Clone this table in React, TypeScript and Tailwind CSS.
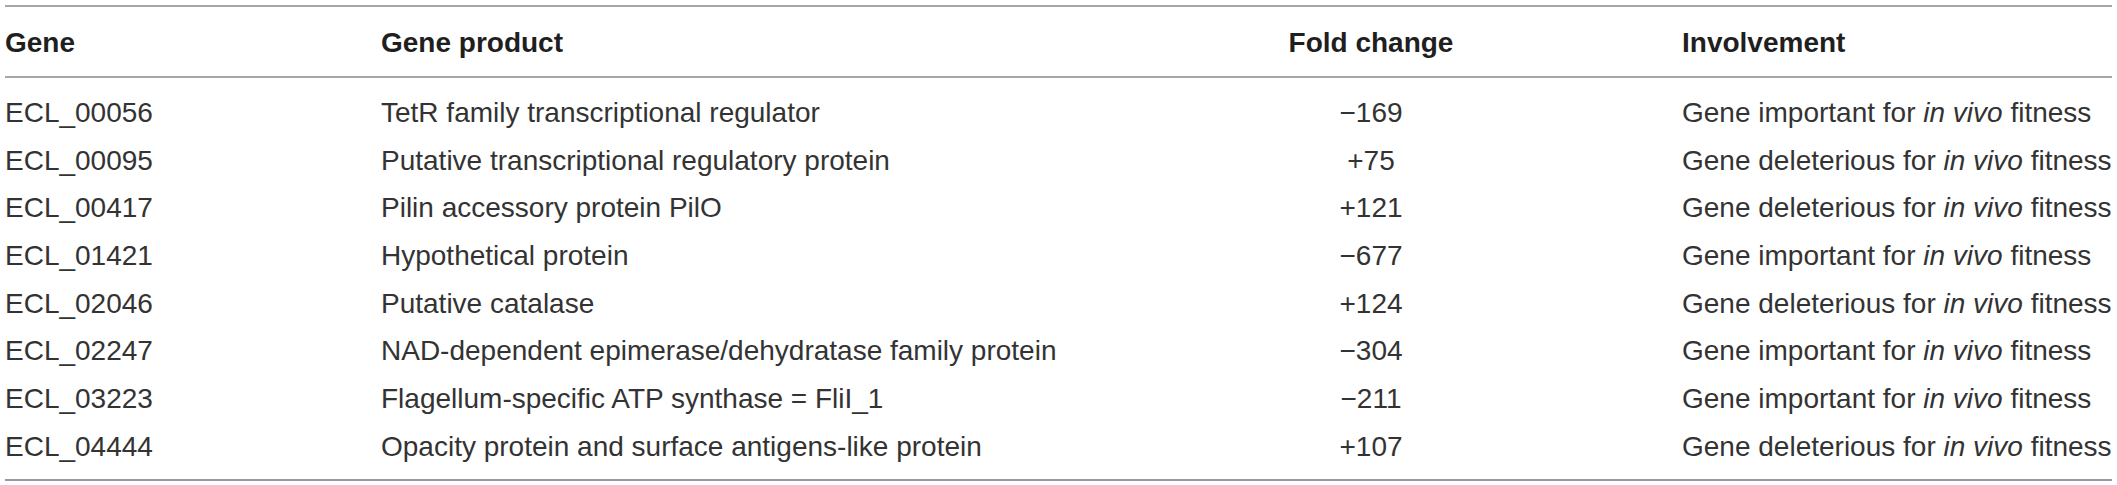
const rows = [
  { gene: 'ECL_00056', product: 'TetR family transcriptional regulator', fold: '−169', effect: 'important' },
  { gene: 'ECL_00095', product: 'Putative transcriptional regulatory protein', fold: '+75', effect: 'deleterious' },
  { gene: 'ECL_00417', product: 'Pilin accessory protein PilO', fold: '+121', effect: 'deleterious' },
  { gene: 'ECL_01421', product: 'Hypothetical protein', fold: '−677', effect: 'important' },
  { gene: 'ECL_02046', product: 'Putative catalase', fold: '+124', effect: 'deleterious' },
  { gene: 'ECL_02247', product: 'NAD-dependent epimerase/dehydratase family protein', fold: '−304', effect: 'important' },
  { gene: 'ECL_03223', product: 'Flagellum-specific ATP synthase = FliI_1', fold: '−211', effect: 'important' },
  { gene: 'ECL_04444', product: 'Opacity protein and surface antigens-like protein', fold: '+107', effect: 'deleterious' },
];

const cols = 'grid grid-cols-[376px_679px_622px_1fr]';

const App = () => {
  return (
    <div className="w-[2117px] h-[485px] bg-white pt-[5px] pl-[5px] text-[28px] leading-[32px] text-[#333333] font-['Liberation_Sans',Arial,sans-serif]">
      <div className="w-[2107px]">
        <div className="h-[2px] bg-[#a6a6a6]" />

        {/* header */}
        <div className={`${cols} pt-[20px] pb-[17px] font-bold text-[#1f1f1f]`}>
          <div>Gene</div>
          <div>Gene product</div>
          <div className="text-center">Fold change</div>
          <div>Involvement</div>
        </div>

        <div className="h-[2px] bg-[#a6a6a6]" />

        <div className="pt-[11px] pb-[8px]">
          {rows.map((r) => (
            <div key={r.gene} className={`${cols} h-[47.7px] items-center`}>
              <div>{r.gene}</div>
              <div>{r.product}</div>
              <div className="text-center">{r.fold}</div>
              <div className="whitespace-nowrap">
                Gene {r.effect} for <i>in vivo</i> fitness
              </div>
            </div>
          ))}
        </div>

        <div className="h-[2px] bg-[#999999]" />
      </div>
    </div>
  );
};

export default App;
